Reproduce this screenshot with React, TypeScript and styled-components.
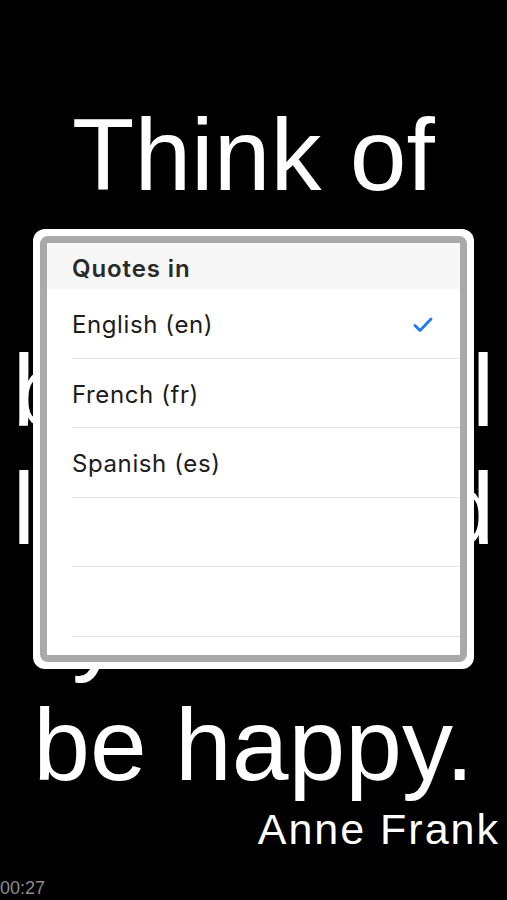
import React from "react";
import styled, { createGlobalStyle } from "styled-components";

const Global = createGlobalStyle`
  html, body {
    margin: 0;
    padding: 0;
    background: #000;
  }
  body {
    width: 507px;
    height: 900px;
    overflow: hidden;
  }
`;

const Screen = styled.div`
  position: relative;
  width: 507px;
  height: 900px;
  background: #000;
  display: flex;
  flex-direction: column;
  font-family: "Liberation Sans", Arial, Helvetica, sans-serif;
  color: #fff;
  overflow: hidden;
`;

const Quote = styled.div`
  padding-top: 96px;
  font-size: 102px;
  line-height: 118px;
  text-align: center;
`;

const QuoteLine = styled.div`
  white-space: nowrap;
`;

const Author = styled.div`
  font-size: 43px;
  line-height: 50px;
  letter-spacing: 2px;
  text-align: right;
  padding-right: 7px;
  white-space: nowrap;
`;

const Timer = styled.div`
  margin-top: auto;
  padding-bottom: 2px;
  font-size: 18px;
  line-height: 20px;
  color: #8a8a8a;
`;

const Popover = styled.div`
  position: absolute;
  left: 33px;
  top: 229px;
  width: 441px;
  height: 440px;
  box-sizing: border-box;
  background: #fff;
  border-radius: 12px;
  padding: 7px;
`;

const Frame = styled.div`
  height: 100%;
  box-sizing: border-box;
  border: 7px solid #a9a9a9;
  border-radius: 8px;
  background: #fff;
  overflow: hidden;
  display: flex;
  flex-direction: column;
  font-family: Inter, "Noto Sans", sans-serif;
`;

const Header = styled.div`
  flex: none;
  height: 46px;
  box-sizing: border-box;
  padding: 4px 0 0 25px;
  background: #f7f7f7;
  display: flex;
  align-items: center;
  font-size: 24px;
  font-weight: 600;
  letter-spacing: 0.9px;
  color: #2a2a2a;
`;

const Row = styled.div`
  flex: none;
  height: 69.5px;
  box-sizing: border-box;
  margin-left: 25px;
  padding: 3px 27px 0 0;
  border-bottom: 1px solid #e4e4e4;
  display: flex;
  align-items: center;
  justify-content: space-between;
  font-size: 24px;
  letter-spacing: 0.6px;
  color: #1c1c1c;
`;

const Check = () => (
  <svg width="20" height="16" viewBox="0 0 20 16" fill="none">
    <polyline
      points="2,8.5 7,13.5 18,2"
      stroke="#1a7cf5"
      strokeWidth="2.8"
      strokeLinecap="round"
      strokeLinejoin="round"
    />
  </svg>
);

const lines = ["Think of", "all the", "beauty still", "left around", "you and", "be happy."];

const languages: { label: string; selected?: boolean }[] = [
  { label: "English (en)", selected: true },
  { label: "French (fr)" },
  { label: "Spanish (es)" },
  { label: "" },
  { label: "" },
  { label: "" },
];

export default function App() {
  return (
    <>
      <Global />
      <Screen>
        <Quote>
          {lines.map((l) => (
            <QuoteLine key={l}>{l}</QuoteLine>
          ))}
        </Quote>
        <Author>Anne Frank</Author>
        <Timer>00:27</Timer>
        <Popover>
          <Frame>
            <Header>Quotes in</Header>
            {languages.map((lang, i) => (
              <Row key={i}>
                <span>{lang.label}</span>
                {lang.selected && <Check />}
              </Row>
            ))}
          </Frame>
        </Popover>
      </Screen>
    </>
  );
}
